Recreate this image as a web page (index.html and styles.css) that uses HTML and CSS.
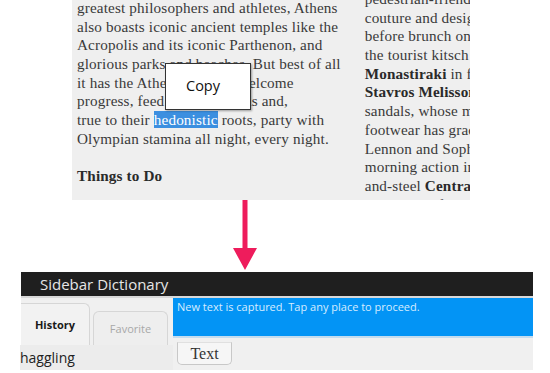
FILE: index.html
```html
<!DOCTYPE html>
<html>
<head>
<meta charset="utf-8">
<link rel="stylesheet" href="styles.css">
</head>
<body>
<div class="article">
  <div class="col col-left">
    <div class="ln">greatest philosophers and athletes, Athens</div>
    <div class="ln">also boasts iconic ancient temples like the</div>
    <div class="ln">Acropolis and its iconic Parthenon, and</div>
    <div class="ln">glorious parks and beaches. But best of all</div>
    <div class="ln">it has the Athenians, who welcome</div>
    <div class="ln">progress, feed off new trends and,</div>
    <div class="ln">true to their <span class="sel">hedonistic</span> roots, party with</div>
    <div class="ln">Olympian stamina all night, every night.</div>
    <div class="ln">&nbsp;</div>
    <div class="ln"><b>Things to Do</b></div>
    <div class="copy">Copy</div>
  </div>
  <div class="col col-right">
    <div class="ln">pedestrian-friendly Plaka,</div>
    <div class="ln">couture and designer shops</div>
    <div class="ln">before brunch on the square;</div>
    <div class="ln">the tourist kitsch of</div>
    <div class="ln"><b>Monastiraki</b> in famous</div>
    <div class="ln"><b>Stavros Melissonos</b>' shop</div>
    <div class="ln">sandals, whose made-to-order</div>
    <div class="ln">footwear has graced John</div>
    <div class="ln">Lennon and Sophia Loren;</div>
    <div class="ln">morning action in the iron-</div>
    <div class="ln">and-steel <b>Central Market</b></div>
    <div class="ln">below with food stalls</div>
  </div>
</div>
<div class="arrow-row">
  <svg class="arrow" width="30" height="72" viewBox="0 0 30 72">
    <polygon points="12.5,0 17.5,0 17.5,48 27,48 15,70 3,48 12.5,48" fill="#ee1c5c"/>
  </svg>
</div>
<div class="app">
  <div class="titlebar">Sidebar Dictionary</div>
  <div class="sep"></div>
  <div class="body">
    <div class="side">
      <div class="tabs">
        <div class="tab active">History</div>
        <div class="tab">Favorite</div>
      </div>
      <div class="list">haggling</div>
    </div>
    <div class="main">
      <div class="notice">New text is captured. Tap any place to proceed.</div>
      <div class="toolbar"><div class="textbtn">Text</div></div>
    </div>
  </div>
</div>
</body>
</html>
```
FILE: styles.css
```css
html, body { margin: 0; padding: 0; background: #ffffff; }
body { width: 550px; height: 373px; overflow: hidden; }

.article {
  margin-left: 72px;
  width: 398px;
  height: 200px;
  background: #efefef;
  overflow: hidden;
  display: flex;
  gap: 24px;
  font-family: "Liberation Serif", "DejaVu Serif", serif;
  font-size: 15.2px;
  letter-spacing: 0.15px;
  line-height: 18.7px;
  color: #3a3a3a;
}
.col { white-space: nowrap; }
.col-left { position: relative; padding-left: 5px; width: 265px; margin-top: -1px; }
.col-right { margin-top: -10px; }
.ln { height: 18.7px; }
.col b { color: #2a2a2a; }
.sel { background: #3b8fe0; color: #ffffff; }

.copy {
  position: absolute;
  left: 93px;
  top: 64px;
  width: 86px;
  height: 47px;
  box-sizing: border-box;
  padding-left: 20px;
  background: #ffffff;
  border: 1px solid #333333;
  box-shadow: 1px 1px 2px rgba(0,0,0,0.35);
  display: flex;
  align-items: center;
  font-family: "Open Sans", "Noto Sans", sans-serif;
  font-size: 14.5px;
  letter-spacing: 0;
  color: #111111;
}

.arrow-row { height: 72px; display: flex; padding-left: 230px; }
.arrow { display: block; }

.app {
  margin-left: 21px;
  width: 512px;
  font-family: "Open Sans", "Noto Sans", sans-serif;
}
.titlebar {
  height: 24px;
  background: #1f1f1f;
  color: #e6e6e6;
  font-size: 15px;
  line-height: 24px;
  padding-left: 19px;
}
.sep { height: 2px; background: #d8d8d8; }
.body { display: flex; height: 72px; background: #f0f0f0; }
.side { width: 152px; display: flex; flex-direction: column; }
.tabs { display: flex; align-items: flex-end; height: 47px; gap: 3px; }
.tab {
  box-sizing: border-box;
  border: 1px solid #d6d6d6;
  border-bottom: none;
  border-radius: 0 6px 0 0;
  font-size: 11px;
  color: #a8a8a8;
  display: flex;
  align-items: center;
  justify-content: center;
}
.tab.active {
  width: 69px;
  height: 42px;
  border-left: none;
  color: #1a1a1a;
  font-weight: bold;
  background: #f2f2f2;
}
.tab:not(.active) {
  width: 75px;
  height: 34px;
  background: #eeeeee;
  border-radius: 6px 6px 0 0;
}
.list {
  height: 25px;
  background: #ececec;
  font-size: 14px;
  line-height: 25px;
  color: #222222;
  margin-left: -1px;
}
.main { flex: 1; display: flex; flex-direction: column; }
.notice {
  height: 38px;
  background: #0394f5;
  color: #d6ecff;
  font-size: 11px;
  line-height: 18px;
  padding-left: 4px;
  border-bottom: 2px solid #c4dcef;
}
.toolbar { flex: 1; padding-left: 4px; padding-top: 4px; }
.textbtn {
  width: 55px;
  height: 23px;
  box-sizing: border-box;
  border: 1px solid #c8c8c8;
  border-top: 1px solid #e0e0e0;
  border-radius: 0 0 5px 5px;
  background: #f6f6f6;
  font-family: "Liberation Serif", serif;
  font-size: 16px;
  line-height: 21px;
  text-align: center;
  color: #333333;
}
```
